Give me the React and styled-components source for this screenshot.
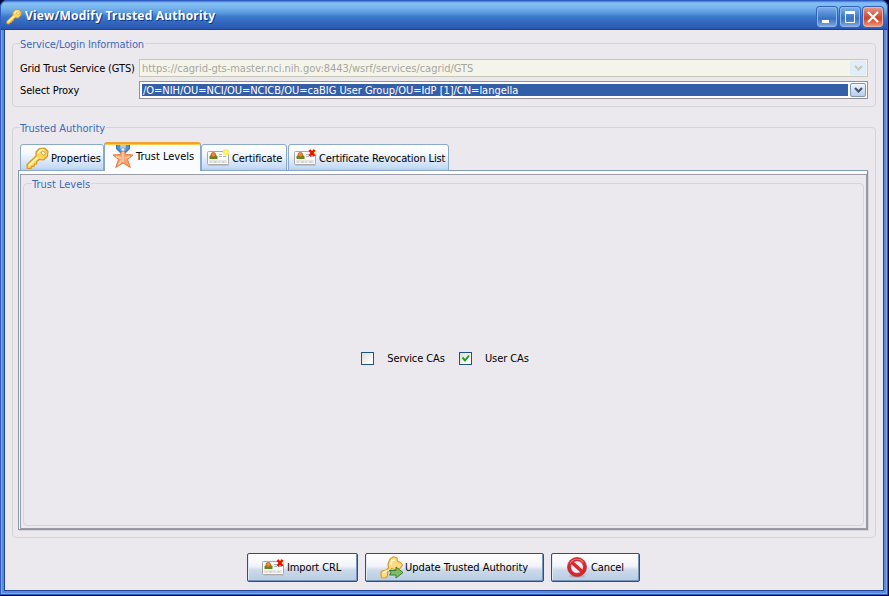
import React from 'react';
import styled, { createGlobalStyle, css } from 'styled-components';

const GlobalStyle = createGlobalStyle`
  * { box-sizing: border-box; }
  body {
    margin: 0;
    background: #04043c;
    overflow: hidden;
    font: 11px/13px 'DejaVu Sans Condensed', 'DejaVu Sans', sans-serif;
    color: #000;
  }
`;

const Window = styled.div`
  width: 888px;
  height: 595px;
  display: flex;
  flex-direction: column;
  background: #5a8bd4;
  border-radius: 7px 7px 0 0;
  overflow: hidden;
`;

const TitleBar = styled.header`
  height: 30px;
  flex: none;
  display: flex;
  align-items: center;
  padding: 3px 4px 0 5px;
  border: 1px solid #2f5cc0;
  border-bottom-color: #1e3f9b;
  border-radius: 7px 7px 0 0;
  background: linear-gradient(#3b78d8 0%, #86c0f3 7%, #76b3ec 25%, #5a9ae0 42%, #3c79cc 56%, #3269c0 75%, #2b55ae 100%);
`;

const Title = styled.h1`
  flex: 1;
  margin: -2px 0 0 3px;
  font: bold 12px/16px 'Noto Sans', sans-serif;
  letter-spacing: 0.2px;
  color: #fff;
  text-shadow: 1px 1px 0 #17337f;
`;

const WindowButtons = styled.div`
  display: flex;
  gap: 3px;
`;

const WindowButton = styled.button`
  width: 20px;
  height: 20px;
  padding: 0;
  display: grid;
  place-items: center;
  border: 1px solid ${p => (p.$close ? '#e5b5b5' : '#8fb9ec')};
  border-radius: 3px;
  box-shadow: 0 0 0 1px #3462bb;
  background: ${p => p.$close
    ? 'linear-gradient(#e79385, #d05238 45%, #d04724 60%, #ee9475)'
    : 'linear-gradient(#79ace7, #4480cd 45%, #3a71bf 60%, #79a9e2)'};
`;

const Frame = styled.div`
  flex: 1;
  min-height: 0;
  display: flex;
  flex-direction: column;
  padding: 0 3px 3px;
  border: solid #2f5bc2;
  border-width: 0 1px 1px;
  box-shadow: inset 1px 0 #79a9e6, inset -1px 0 #79a9e6, inset 0 -1px #79a9e6;
`;

const Body = styled.main`
  flex: 1;
  min-height: 0;
  display: flex;
  flex-direction: column;
  padding: 4px 7px 0;
  border: solid #24479f;
  border-width: 0 1px 1px;
  background: #ebe9ee;
`;

const Group = styled.fieldset`
  min-width: 0;
  flex: none;
  margin: ${p => p.$margin || 0};
  padding: ${p => p.$padding};
  height: ${p => p.$height}px;
  border: 1px solid #d5d4d8;
  border-radius: 4px;
`;

const Legend = styled.legend`
  height: 16px;
  margin-left: ${p => p.$shift || 0}px;
  padding: 3px 1px 0 0;
  line-height: 13px;
  letter-spacing: ${p => p.$tracking || 0}px;
  color: #3c69b8;
`;

const FieldRow = styled.label`
  display: grid;
  grid-template-columns: 119px 729px;
  align-items: center;
  height: 18px;
  margin-bottom: 4px;
  letter-spacing: -0.13px;
`;

const Combo = styled.span`
  height: 18px;
  display: flex;
  align-items: stretch;
  padding: ${p => (p.$disabled ? '1px 1px 1px 2px' : '2px 1px 1px 2px')};
  border: 1px solid ${p => (p.$disabled ? '#c9c7ba' : '#919096')};
  background: ${p => (p.$disabled ? '#f5f4ea' : '#fff')};
`;

const ComboValue = styled.span`
  flex: 1;
  height: 12px;
  align-self: flex-start;
  margin-right: 2px;
  letter-spacing: -0.03px;
  white-space: nowrap;
  ${p => (p.$selected
    ? css`background: #335ea8; color: #fff; line-height: 14px; padding-left: 1px;`
    : css`color: #a6a69d; line-height: 15px;`)}
`;

const ComboArrow = styled.span`
  width: 16px;
  margin-top: ${p => (p.$disabled ? 0 : -1)}px;
  display: grid;
  place-items: center;
  border: 1px solid ${p => (p.$disabled ? '#dfeaf8' : '#8297b8')};
  border-radius: 2px;
  background: ${p => (p.$disabled ? '#e0edfd' : 'linear-gradient(#eef5ff, #b5cdeb)')};
`;

const TabList = styled.div`
  display: flex;
  align-items: flex-end;
  height: 29px;
  padding-left: 2px;
`;

const Tab = styled.div`
  flex: none;
  width: ${p => p.$width}px;
  height: 27px;
  display: flex;
  align-items: center;
  gap: ${p => p.$gap}px;
  padding: 1px 0 0 ${p => p.$inset}px;
  margin-right: ${p => p.$after || 0}px;
  border: 1px solid #8aa9c9;
  border-radius: 3px 3px 0 0;
  background: linear-gradient(#fff 0%, #f4f8fe 35%, #c5dbf6 90%, #b5cdeb 100%);
  letter-spacing: ${p => p.$tracking || 0}px;
  white-space: nowrap;
  ${p => p.$active && css`
    height: 29px;
    align-items: flex-start;
    padding-top: 0;
    border-top: 2px solid #f0a030;
    border-bottom: 0;
    background: #fafbfe;
    box-shadow: inset 0 1px #ffcb42;
    z-index: 1;
    & > span { margin-top: 6px; }
    & > svg { margin-top: 1px; }
  `}
`;

const Panel = styled.section`
  height: 360px;
  margin-top: -1px;
  padding: 3px 0 0 1px;
  border: 1px solid #7f9ab5;
  background: #fff;
  box-shadow: 1px 1px #d6d5d9;
`;

const PanelInner = styled.div`
  height: 355px;
  padding: 0 2px 2px;
  border: 1px solid #9c9ca6;
  background: #ebe9ee;
`;

const Options = styled.div`
  height: 334px;
  display: flex;
  justify-content: center;
  align-items: center;
  gap: 14px;
  padding-left: 3px;
`;

const Option = styled.label`
  display: flex;
  align-items: center;
  gap: 13px;
  letter-spacing: -0.08px;
`;

const Box = styled.span`
  width: 13px;
  height: 13px;
  display: grid;
  place-items: center;
  border: 1px solid #1d5281;
  background: linear-gradient(135deg, #dddcd6, #fff 85%);
`;

const Actions = styled.footer`
  display: flex;
  justify-content: center;
  gap: 7px;
  margin: 15px 0 0 -1px;
`;

const ActionButton = styled.button`
  width: ${p => p.$width}px;
  height: 29px;
  display: flex;
  align-items: center;
  gap: ${p => p.$gap}px;
  padding: 0 0 0 ${p => p.$inset || 14}px;
  border: 1px solid #2c4f8c;
  border-radius: 2px;
  background: linear-gradient(#fff 0%, #f1f4f9 45%, #cbd9ea 60%, #b9cce2 100%);
  box-shadow: inset -1px -1px #7693bb, inset 1px 0 #e2eaf4;
  font: inherit;
  letter-spacing: ${p => p.$tracking || 0}px;
  color: #000;
  white-space: nowrap;
`;

const Svg = styled.svg`
  display: block;
  flex: none;
`;

const KeyIcon = ({ size }) => (
  <Svg width={size} height={size} viewBox="0 0 23 23">
    <path
      d="M13.5 1.5 L18.5 1 L22 4.5 L21.3 9.5 L17.5 13 L13.2 12.5 L10.6 14.8 L10.7 17 L8.5 17.2 L8 19.3 L5.8 19.3 L5 21.5 L1.2 21.3 L1 17.8 L10 9 L10 5 Z"
      fill="#fcd65c" stroke="#d9951f" strokeWidth="1.2" strokeLinejoin="round"
    />
    <path d="M12 6 L14.5 3.3 L18 3 M3 18.5 L11.5 10.5" fill="none" stroke="#fff3b5" strokeWidth="1.8" />
    <ellipse cx="17.3" cy="6.2" rx="2.3" ry="1.5" transform="rotate(42 17.3 6.2)" fill="#fff" stroke="#d48d1c" strokeWidth=".8" />
  </Svg>
);

const MedalIcon = () => (
  <Svg width="22" height="23" viewBox="0 0 22 23">
    <path d="M4 0h14v4l-4 4H8L4 4z" fill="#5593cf" />
    <path d="M8 0h6l-1 6H9z" fill="#a9cdec" />
    <path d="M4.5 0v3l4 4M17.5 0v3l-4 4" fill="none" stroke="#326fa8" />
    <path
      d="M11 3l2.800 6.500 7.200.5-5.500 4.500 2.800 8-7.300-4.500-7.300 4.500 2.800-8L1 10l7.200-.5z"
      fill="#f8a36d" stroke="#e3783d" strokeWidth="1" strokeLinejoin="round"
    />
    <path d="M11 7v10M4 11.500l5.500 1.500M18 11.500l-5 1.500M6.500 19.500l3-4" stroke="#fdd3b5" strokeWidth="1.3" />
    <circle cx="11" cy="4.500" r="1.800" fill="#dcecf8" stroke="#7b91a8" strokeWidth=".6" />
  </Svg>
);

const CertificateIcon = ({ revoked }) => (
  <Svg width="23" height="18" viewBox="0 0 23 18">
    <rect x="1" y="15" width="21" height="2" rx="1" fill="#c4c4c8" />
    <rect x=".5" y="2.500" width="21" height="13" rx="1" fill="#fbfbfa" stroke="#a8a8a6" />
    <path d="M2.500 10V7.500L4 6h5l1.500 1.500V10z" fill="#5c8a22" />
    <circle cx="6.300" cy="5.800" r="2.300" fill="#f08a28" stroke="#b25c18" strokeWidth=".8" />
    <path d="M12 5.500h4M12 7.500h8" stroke="#b2b2b2" strokeDasharray="3 1" />
    <path d="M2.500 12.500h17" stroke="#d3d3d3" strokeWidth="3" strokeDasharray="1 1" />
    <path d="M3.500 13h14" stroke="#b2b2b2" strokeDasharray="1 3 2 2" />
    <circle cx="19" cy="3.300" r="3" fill="#fff645" stroke="#eee989" strokeWidth=".6" />
    <circle cx="19" cy="3.300" r="1.200" fill="#fffbb0" />
    {revoked && <path d="M15.500 1l5 6M20.500 1l-5 6" stroke="#f00808" strokeWidth="2.400" />}
  </Svg>
);

const KeyUpdateIcon = () => (
  <Svg width="24" height="23" viewBox="0 0 24 23">
    <path
      d="M10 3L13.500.8L17 2L17.500 5L20.500 6.500L22.500 9L20 12.500L15 13.500L11.500 12.500L10 15L7.500 16V20L5.500 22H2L1 20V16L3 14.500L5.500 14.500L8.500 12L8 8Z"
      fill="#fbdc7c" stroke="#df9831" strokeWidth="1.200" strokeLinejoin="round"
    />
    <path d="M10.500 9L12 4.500L15 4M3 17L7 14.500" fill="none" stroke="#fff5cd" strokeWidth="1.700" />
    <path d="M9.500 14.500h6.500v-3.500l7 5.500-7 5.500v-3h-6.500l1.500-2.200z" fill="#7cbd65" stroke="#397c36" strokeLinejoin="round" />
  </Svg>
);

const CancelIcon = () => (
  <Svg width="20" height="21" viewBox="0 0 20 21">
    <ellipse cx="10" cy="19" rx="8" ry="1.700" fill="#a8b5c6" />
    <circle cx="10" cy="10" r="9.500" fill="#d9262c" stroke="#b9282a" strokeWidth=".7" />
    <circle cx="10" cy="10" r="6.300" fill="#eef1f5" stroke="#b81d22" strokeWidth=".6" />
    <path d="M5 5.500l10 9" stroke="#d9282e" strokeWidth="3.600" />
    <path d="M3 6.500A8 8 0 0 1 16.500 5.500" fill="none" stroke="#f07c7c" strokeWidth="1.200" />
  </Svg>
);

const Chevron = ({ color }) => (
  <Svg width="9" height="6" viewBox="0 0 9 6">
    <path d="M1 1l3.500 3.500L8 1" fill="none" stroke={color} strokeWidth="2.200" />
  </Svg>
);

export default function App() {
  return (
    <>
      <GlobalStyle />
      <Window>
        <TitleBar>
          <KeyIcon size={16} />
          <Title>View/Modify Trusted Authority</Title>
          <WindowButtons>
            <WindowButton aria-label="Minimize">
              <Svg width="16" height="16"><path d="M3 12.500h7" stroke="#fff" strokeWidth="3" /></Svg>
            </WindowButton>
            <WindowButton aria-label="Maximize">
              <Svg width="16" height="16"><path d="M3.500 3v10.500h9V3" fill="none" stroke="#fff" /><path d="M3 3.500h10" stroke="#fff" strokeWidth="3" /></Svg>
            </WindowButton>
            <WindowButton $close aria-label="Close">
              <Svg width="16" height="16"><path d="M3 3l10 10M13 3L3 13" stroke="#fff" strokeWidth="2.200" /></Svg>
            </WindowButton>
          </WindowButtons>
        </TitleBar>
        <Frame>
          <Body>
            <Group $height={72} $margin="1px 0 0" $padding="8px 7px 0">
              <Legend $tracking={-0.12}>Service/Login Information</Legend>
              <FieldRow>
                Grid Trust Service (GTS)
                <Combo $disabled>
                  <ComboValue>https://cagrid-gts-master.nci.nih.gov:8443/wsrf/services/cagrid/GTS</ComboValue>
                  <ComboArrow $disabled><Chevron color="#c9c7ba" /></ComboArrow>
                </Combo>
              </FieldRow>
              <FieldRow>
                Select Proxy
                <Combo>
                  <ComboValue $selected>/O=NIH/OU=NCI/OU=NCICB/OU=caBIG User Group/OU=IdP [1]/CN=langella</ComboValue>
                  <ComboArrow><Chevron color="#46546c" /></ComboArrow>
                </Combo>
              </FieldRow>
            </Group>
            <Group $height={419} $margin="12px 0 0" $padding="7px 7px 7px 5px">
              <Legend $shift={2}>Trusted Authority</Legend>
              <TabList>
                <Tab $width={84} $inset={5} $gap={2}><KeyIcon size={23} />Properties</Tab>
                <Tab $active $width={97} $inset={7} $gap={2}><MedalIcon /><span>Trust Levels</span></Tab>
                <Tab $width={86} $inset={5} $gap={2} $after={1} $tracking={-0.1}><CertificateIcon />Certificate</Tab>
                <Tab $width={161} $inset={5} $gap={2} $tracking={-0.13}><CertificateIcon revoked />Certificate Revocation List</Tab>
              </TabList>
              <Panel>
                <PanelInner>
                  <Group $height={351} $padding="0 7px">
                    <Legend $shift={1}>Trust Levels</Legend>
                    <Options>
                      <Option><Box />Service CAs</Option>
                      <Option>
                        <Box>
                          <Svg width="9" height="9"><path d="M1.500 3.500L4 6.500L8 1.500" fill="none" stroke="#21a121" strokeWidth="2" /></Svg>
                        </Box>
                        User CAs
                      </Option>
                    </Options>
                  </Group>
                </PanelInner>
              </Panel>
            </Group>
            <Actions>
              <ActionButton $width={111} $gap={2} $tracking={-0.12}><CertificateIcon revoked />Import CRL</ActionButton>
              <ActionButton $width={179} $gap={1} $tracking={-0.04}><KeyUpdateIcon />Update Trusted Authority</ActionButton>
              <ActionButton $width={89} $inset={15} $gap={4} $tracking={-0.1}><CancelIcon />Cancel</ActionButton>
            </Actions>
          </Body>
        </Frame>
      </Window>
    </>
  );
}
